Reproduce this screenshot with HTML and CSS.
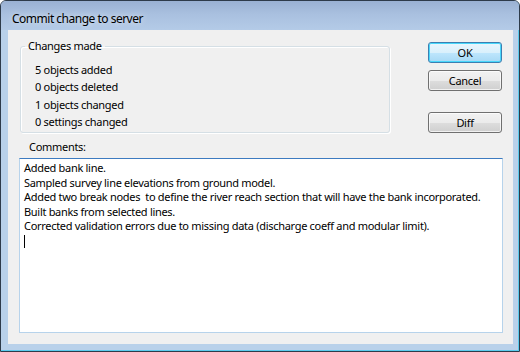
FILE: index.html
```html
<!DOCTYPE html>
<html lang="en">
<head>
    <meta charset="UTF-8">
    <title>Commit change to server</title>
    <link rel="stylesheet" href="styles.css">
</head>
<body>
<div class="dlg">
    <div class="dlg-title">Commit change to server</div>
    <div class="dlg-client">
        <div class="dlg-top">
            <fieldset class="group">
                <legend>Changes made</legend>
                <div class="group-line">5 objects added</div>
                <div class="group-line">0 objects deleted</div>
                <div class="group-line">1 objects changed</div>
                <div class="group-line">0 settings changed</div>
            </fieldset>
            <div class="btns">
                <div class="btn btn-default">OK</div>
                <div class="btn">Cancel</div>
                <div class="btn btn-diff">Diff</div>
            </div>
        </div>
        <div class="label">Comments:</div>
        <div class="memo">
            <div>Added bank line.</div>
            <div>Sampled survey line elevations from ground model.</div>
            <div>Added two break nodes&nbsp; to define the river reach section that will have the bank incorporated.</div>
            <div>Built banks from selected lines.</div>
            <div>Corrected validation errors due to missing data (discharge coeff and modular limit).</div>
            <div><span class="caret"></span></div>
        </div>
    </div>
</div>
</body>
</html>
```

FILE: styles.css
```css
* {
    box-sizing: border-box;
}
body {
    margin: 0;
    font-family: "Noto Sans", "Liberation Sans", sans-serif;
    font-size: 11px;
    letter-spacing: -0.3px;
    color: #000;
}
.dlg {
    width: 520px;
    height: 352px;
    border: 1px solid #2e3b4a;
    border-radius: 6px 6px 0 0;
    background: #b9d1ea;
    box-shadow: inset -1px -1px 0 #5ccbed;
    display: flex;
    flex-direction: column;
}
.dlg-title {
    height: 29px;
    padding: 10px 0 0 11px;
    font-size: 12px;
    letter-spacing: -0.5px;
    line-height: 16px;
    border-radius: 5px 5px 0 0;
    background: linear-gradient(#9ab1d3, #a9c0df 45%, #b4cbe7 100%);
    text-shadow: 0 0 6px rgba(255, 255, 255, .8);
}
.dlg-client {
    margin: 0 6px 7px 7px;
    flex: 1;
    background: #f0f0f0;
    padding: 8px 9px 11px 11px;
    display: flex;
    flex-direction: column;
}
.dlg-top {
    display: flex;
    align-items: flex-start;
}
.group {
    width: 370px;
    margin: 0 0 0 1px;
    padding: 7px 0 2px 14px;
    border: 1px solid #d5dfe5;
    border-radius: 3px;
    box-shadow: inset 1px 1px 0 #fff, 1px 1px 0 #fff;
}
.group legend {
    margin-left: -10px;
    padding: 0 3px;
    line-height: 16px;
}
.group-line {
    line-height: 17.33px;
}
.btns {
    margin: 4px 0 0 38px;
    display: flex;
    flex-direction: column;
    gap: 7px;
}
.btn {
    width: 74px;
    height: 21px;
    line-height: 19px;
    text-align: center;
    border: 1px solid #707070;
    border-radius: 3px;
    background: linear-gradient(#f2f2f2 0, #ebebeb 50%, #dddddd 51%, #cfcfcf 100%);
    box-shadow: inset 0 0 0 1px rgba(255, 255, 255, .7);
}
.btn-default {
    border-color: #3c7fb1;
    background: linear-gradient(#eaf6fd 0, #d9f0fc 50%, #bee6fd 51%, #a7d9f5 100%);
    box-shadow: inset 0 0 0 1px #48d7fb;
}
.btn-diff {
    margin-top: 14px;
}
.label {
    margin: 6px 0 3px 10px;
    line-height: 16px;
}
.memo {
    flex: 1;
    width: 484px;
    background: #fff;
    border: 1px solid #b7d3eb;
    border-top-color: #3d7bc0;
    padding: 2px 4px 1px;
    line-height: 14.5px;
    white-space: nowrap;
}
.caret {
    display: inline-block;
    width: 1px;
    height: 13px;
    background: #000;
    vertical-align: -3px;
}
```
